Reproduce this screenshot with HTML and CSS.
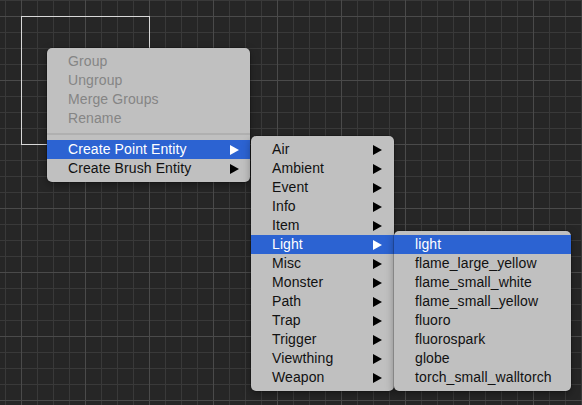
FILE: index.html
```html
<!DOCTYPE html>
<html>
<head>
<meta charset="utf-8">
<link rel="stylesheet" href="styles.css">
</head>
<body>
<div class="canvas">
  <div class="selection"></div>

  <div class="menu menu-main">
    <div class="item disabled">Group</div>
    <div class="item disabled">Ungroup</div>
    <div class="item disabled">Merge Groups</div>
    <div class="item disabled">Rename</div>
    <div class="sep"></div>
    <div class="item active"><span>Create Point Entity</span><svg class="arrow" viewBox="0 0 9 10"><path d="M0 0L9 5L0 10Z"/></svg></div>
    <div class="item"><span>Create Brush Entity</span><svg class="arrow" viewBox="0 0 9 10"><path d="M0 0L9 5L0 10Z"/></svg></div>
  </div>

  <div class="menu menu-cat">
    <div class="item"><span>Air</span><svg class="arrow" viewBox="0 0 9 10"><path d="M0 0L9 5L0 10Z"/></svg></div>
    <div class="item"><span>Ambient</span><svg class="arrow" viewBox="0 0 9 10"><path d="M0 0L9 5L0 10Z"/></svg></div>
    <div class="item"><span>Event</span><svg class="arrow" viewBox="0 0 9 10"><path d="M0 0L9 5L0 10Z"/></svg></div>
    <div class="item"><span>Info</span><svg class="arrow" viewBox="0 0 9 10"><path d="M0 0L9 5L0 10Z"/></svg></div>
    <div class="item"><span>Item</span><svg class="arrow" viewBox="0 0 9 10"><path d="M0 0L9 5L0 10Z"/></svg></div>
    <div class="item active"><span>Light</span><svg class="arrow" viewBox="0 0 9 10"><path d="M0 0L9 5L0 10Z"/></svg></div>
    <div class="item"><span>Misc</span><svg class="arrow" viewBox="0 0 9 10"><path d="M0 0L9 5L0 10Z"/></svg></div>
    <div class="item"><span>Monster</span><svg class="arrow" viewBox="0 0 9 10"><path d="M0 0L9 5L0 10Z"/></svg></div>
    <div class="item"><span>Path</span><svg class="arrow" viewBox="0 0 9 10"><path d="M0 0L9 5L0 10Z"/></svg></div>
    <div class="item"><span>Trap</span><svg class="arrow" viewBox="0 0 9 10"><path d="M0 0L9 5L0 10Z"/></svg></div>
    <div class="item"><span>Trigger</span><svg class="arrow" viewBox="0 0 9 10"><path d="M0 0L9 5L0 10Z"/></svg></div>
    <div class="item"><span>Viewthing</span><svg class="arrow" viewBox="0 0 9 10"><path d="M0 0L9 5L0 10Z"/></svg></div>
    <div class="item"><span>Weapon</span><svg class="arrow" viewBox="0 0 9 10"><path d="M0 0L9 5L0 10Z"/></svg></div>
  </div>

  <div class="menu menu-ent">
    <div class="item active">light</div>
    <div class="item">flame_large_yellow</div>
    <div class="item">flame_small_white</div>
    <div class="item">flame_small_yellow</div>
    <div class="item">fluoro</div>
    <div class="item">fluorospark</div>
    <div class="item">globe</div>
    <div class="item">torch_small_walltorch</div>
  </div>
</div>
</body>
</html>
```

FILE: styles.css
```css
html, body {
  margin: 0;
  padding: 0;
}
body {
  width: 582px;
  height: 405px;
  overflow: hidden;
  font-family: "Liberation Sans", Arial, sans-serif;
  font-size: 14px;
  letter-spacing: 0.1px;
}
.canvas {
  position: relative;
  width: 582px;
  height: 405px;
  background-color: #262626;
  background-image:
    linear-gradient(to right, #4a4a4a 1px, transparent 1px),
    linear-gradient(to bottom, #4a4a4a 1px, transparent 1px),
    linear-gradient(to right, #393939 1px, transparent 1px),
    linear-gradient(to bottom, #393939 1px, transparent 1px);
  background-size: 64px 100%, 100% 64px, 16px 100%, 100% 16px;
  background-position: 21px 0, 0 16px, 5px 0, 0 0;
}
.selection {
  position: absolute;
  left: 21px;
  top: 16px;
  width: 127px;
  height: 127px;
  border: 1px solid #d8d8d8;
}
.menu {
  position: absolute;
  box-sizing: border-box;
  display: flex;
  flex-direction: column;
  padding: 4px 0;
  background: #c0c0c0;
  border-radius: 5px;
  box-shadow: 0 0 0 0.5px rgba(0,0,0,0.35), 0 3px 8px rgba(0,0,0,0.35);
  color: #111;
}
.menu-main {
  left: 47px;
  top: 48px;
  width: 203px;
}
.menu-cat {
  left: 251px;
  top: 136px;
  width: 143px;
}
.menu-ent {
  left: 394px;
  top: 231px;
  width: 177px;
}
.item {
  height: 19px;
  line-height: 19px;
  padding: 0 11px 0 21px;
  display: flex;
  align-items: center;
  justify-content: space-between;
  white-space: nowrap;
}
.menu-cat .item {
  padding-right: 12px;
}
.item.disabled {
  color: #858585;
}
.item.active {
  background: #2c63d2;
  color: #fff;
}
.arrow {
  width: 9px;
  height: 10px;
  fill: #000;
}
.item.active .arrow {
  fill: #fff;
}
.sep {
  height: 12px;
  display: flex;
  align-items: center;
}
.sep::before {
  content: "";
  flex: 1;
  height: 2px;
  background: #b0b0b0;
}
```
